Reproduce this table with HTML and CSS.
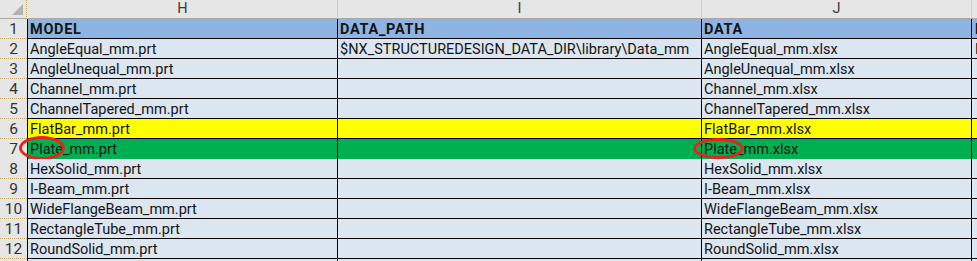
FILE: index.html
```html
<!DOCTYPE html>
<html>
<head>
<meta charset="utf-8">
<link rel="stylesheet" href="styles.css">
</head>
<body>
<div class="sheet">
  <div class="row colhead">
    <div class="corner"><svg class="tri" width="11" height="11" viewBox="0 0 11 11"><polygon points="11,0 11,11 0,11" fill="#b4b4b4"/></svg></div>
    <div class="ch first">H</div>
    <div class="ch">I</div>
    <div class="ch">J</div>
    <div class="ch last"></div>
  </div>
  <div class="row hdr">
    <div class="rh">1</div>
    <div class="c first b">MODEL</div>
    <div class="c b">DATA_PATH</div>
    <div class="c b">DATA</div>
    <div class="c b last">MATERIAL</div>
  </div>
  <div class="row">
    <div class="rh">2</div>
    <div class="c first">AngleEqual_mm.prt</div>
    <div class="c">$NX_STRUCTUREDESIGN_DATA_DIR\library\Data_mm</div>
    <div class="c">AngleEqual_mm.xlsx</div>
    <div class="c last">NX</div>
  </div>
  <div class="row">
    <div class="rh">3</div>
    <div class="c first">AngleUnequal_mm.prt</div>
    <div class="c"></div>
    <div class="c">AngleUnequal_mm.xlsx</div>
    <div class="c last"></div>
  </div>
  <div class="row">
    <div class="rh">4</div>
    <div class="c first">Channel_mm.prt</div>
    <div class="c"></div>
    <div class="c">Channel_mm.xlsx</div>
    <div class="c last"></div>
  </div>
  <div class="row">
    <div class="rh">5</div>
    <div class="c first">ChannelTapered_mm.prt</div>
    <div class="c"></div>
    <div class="c">ChannelTapered_mm.xlsx</div>
    <div class="c last"></div>
  </div>
  <div class="row yellow">
    <div class="rh">6</div>
    <div class="c first">FlatBar_mm.prt</div>
    <div class="c"></div>
    <div class="c">FlatBar_mm.xlsx</div>
    <div class="c last"></div>
  </div>
  <div class="row green">
    <div class="rh">7</div>
    <div class="c first">Plate_mm.prt<span class="ring ring-h"></span></div>
    <div class="c"></div>
    <div class="c">Plate_mm.xlsx<span class="ring ring-j"></span></div>
    <div class="c last"></div>
  </div>
  <div class="row">
    <div class="rh">8</div>
    <div class="c first">HexSolid_mm.prt</div>
    <div class="c"></div>
    <div class="c">HexSolid_mm.xlsx</div>
    <div class="c last"></div>
  </div>
  <div class="row">
    <div class="rh">9</div>
    <div class="c first">I-Beam_mm.prt</div>
    <div class="c"></div>
    <div class="c">I-Beam_mm.xlsx</div>
    <div class="c last"></div>
  </div>
  <div class="row">
    <div class="rh">10</div>
    <div class="c first">WideFlangeBeam_mm.prt</div>
    <div class="c"></div>
    <div class="c">WideFlangeBeam_mm.xlsx</div>
    <div class="c last"></div>
  </div>
  <div class="row">
    <div class="rh">11</div>
    <div class="c first">RectangleTube_mm.prt</div>
    <div class="c"></div>
    <div class="c">RectangleTube_mm.xlsx</div>
    <div class="c last"></div>
  </div>
  <div class="row">
    <div class="rh">12</div>
    <div class="c first">RoundSolid_mm.prt</div>
    <div class="c"></div>
    <div class="c">RoundSolid_mm.xlsx</div>
    <div class="c last"></div>
  </div>
  <div class="row">
    <div class="rh"></div>
    <div class="c first"></div>
    <div class="c"></div>
    <div class="c"></div>
    <div class="c last"></div>
  </div>
</div>
</body>
</html>
```
FILE: styles.css
```css
html, body {
  margin: 0;
  padding: 0;
  background: #ffffff;
  overflow: hidden;
}
.sheet {
  width: 977px;
  height: 261px;
  overflow: hidden;
  font-family: Roboto, "Liberation Sans", sans-serif;
  font-size: 14.5px;
  color: #141414;
}
.row {
  display: grid;
  grid-template-columns: 27px 311px 364px 270px 1fr;
  height: 20px;
}
.row > div {
  box-sizing: border-box;
  white-space: nowrap;
  overflow: hidden;
}
.colhead {
  height: 19px;
  background: #e6e6e6;
}
.colhead > div {
  border-bottom: 1px solid #a8a8a8;
}
.corner {
  position: relative;
  border-right: 1px dotted #c9a85e;
}
.tri {
  position: absolute;
  right: 3px;
  bottom: 3px;
}
.ch {
  border-right: 1px solid #cfcfcf;
  text-align: center;
  line-height: 18px;
  font-size: 14.5px;
  color: #3a3a3a;
}
.ch.first {
  border-left: 1px solid transparent;
}
.ch.last {
  border-right: none;
}
.rh {
  background: #e6e6e6;
  border-bottom: 1px dotted #c9a85e;
  text-align: center;
  line-height: 20px;
  font-size: 15.5px;
  color: #333333;
}
.c {
  position: relative;
  background: #dce6f1;
  border-right: 1px solid #000000;
  border-bottom: 1px solid #000000;
  padding-left: 2px;
  line-height: 21px;
}
.c.first {
  border-left: 1px solid #000000;
  padding-left: 2px;
}
.c.last {
  border-right: none;
  padding-left: 3px;
}
.b {
  font-weight: bold;
  letter-spacing: 0.7px;
}
.hdr .c {
  background: #8db4e2;
}
.yellow .c {
  background: #ffff00;
}
.green .c {
  background: #00b050;
  overflow: visible;
}
.ring {
  position: absolute;
  box-sizing: border-box;
  border: 3px solid #e8231f;
  border-radius: 50%;
  pointer-events: none;
}
.ring-h {
  left: -9px;
  top: -3px;
  width: 46px;
  height: 24px;
}
.ring-j {
  left: -9px;
  top: -1px;
  width: 51px;
  height: 21px;
}
```
